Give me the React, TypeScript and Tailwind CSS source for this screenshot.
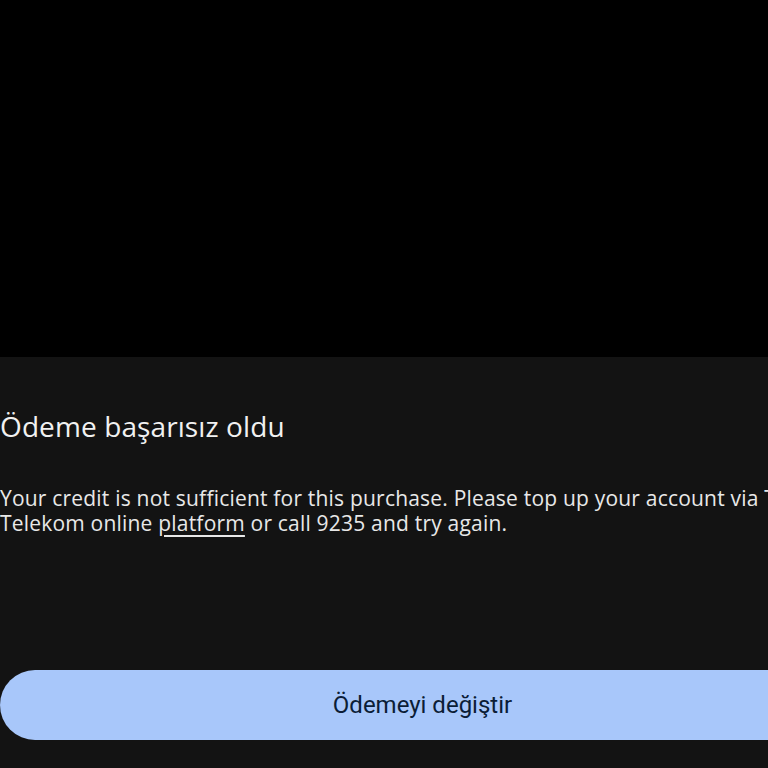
export default function App() {
  return (
    <div className="w-[768px] h-[768px] overflow-hidden bg-black flex flex-col" style={{ fontFamily: "Roboto, 'Noto Sans', sans-serif" }}>
      <div className="h-[357px] shrink-0" />
      <div className="w-[845px] flex-1 bg-[#131313] flex flex-col">
        <h1 className="mt-[52px] text-[28px] leading-[34px] text-[#f1f1f1] font-normal tracking-[0.1px]" style={{ fontFamily: "'Open Sans', Roboto, sans-serif" }}>
          Ödeme başarısız oldu
        </h1>
        <p className="mt-[43px] text-[21px] leading-[25px] text-[#e8e8e8] whitespace-nowrap tracking-[0.2px]" style={{ fontFamily: "'Open Sans', Roboto, sans-serif" }}>
          Your credit is not sufficient for this purchase. Please top up your account via Türk
          <br />
          Telekom online <span className="underline underline-offset-[4px]">platform</span> or call 9235 and try again.
        </p>
        <button className="mt-[134px] h-[70px] w-full rounded-full bg-[#a8c7fa] text-[24px] text-[#0b1d36]">
          Ödemeyi değiştir
        </button>
      </div>
    </div>
  );
}
